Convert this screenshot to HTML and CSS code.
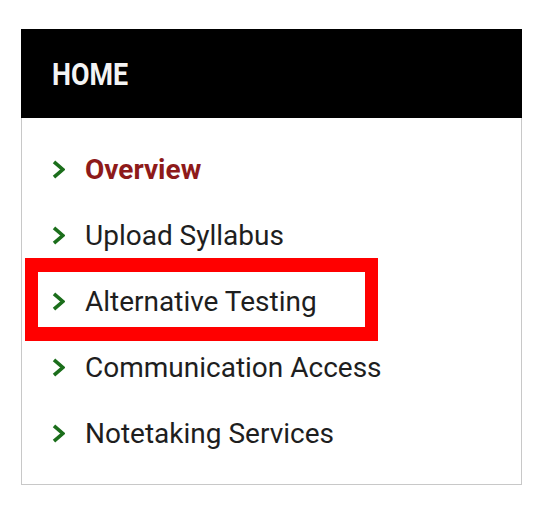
FILE: index.html
```html
<!DOCTYPE html>
<html>
<head>
<meta charset="utf-8">
<link rel="stylesheet" href="styles.css">
</head>
<body>
<nav class="menu">
  <div class="menu-head"><span class="menu-title">HOME</span></div>
  <ul class="menu-list">
    <li class="item active"><svg class="chev" viewBox="0 0 13 19"><path d="M2 1.8 L10.8 9.5 L2 17.2" /></svg><span>Overview</span></li>
    <li class="item"><svg class="chev" viewBox="0 0 13 19"><path d="M2 1.8 L10.8 9.5 L2 17.2" /></svg><span>Upload Syllabus</span></li>
    <li class="item highlighted"><svg class="chev" viewBox="0 0 13 19"><path d="M2 1.8 L10.8 9.5 L2 17.2" /></svg><span>Alternative Testing</span></li>
    <li class="item"><svg class="chev" viewBox="0 0 13 19"><path d="M2 1.8 L10.8 9.5 L2 17.2" /></svg><span>Communication Access</span></li>
    <li class="item"><svg class="chev" viewBox="0 0 13 19"><path d="M2 1.8 L10.8 9.5 L2 17.2" /></svg><span>Notetaking Services</span></li>
  </ul>
</nav>
</body>
</html>
```
FILE: styles.css
```css
html, body {
  margin: 0;
  padding: 0;
  background: #ffffff;
}
body {
  padding: 29px 0 0 21px;
  font-family: Roboto, "Liberation Sans", sans-serif;
}
.menu {
  width: 501px;
  border: 1px solid #c8c8c8;
  border-top: none;
  box-sizing: border-box;
  height: 456px;
}
.menu-head {
  background: #000;
  height: 89px;
  display: flex;
  align-items: center;
  padding-left: 31px;
  margin-left: -1px;
  margin-right: -1px;
}
.menu-title {
  display: inline-block;
  color: #f4f4f4;
  font-weight: 700;
  font-size: 32px;
  transform: scaleX(0.84);
  transform-origin: left center;
  line-height: 1;
}
.menu-list {
  list-style: none;
  margin: 0;
  padding: 18px 0 0 0;
}
.item {
  display: flex;
  align-items: center;
  height: 66px;
  padding-left: 30px;
  font-size: 28px;
  color: #1e1e1e;
}
.item span {
  margin-left: 20px;
}
.chev {
  flex-shrink: 0;
  width: 13px;
  height: 19px;
  fill: none;
  stroke: #1b6e1b;
  stroke-width: 3.6;
  stroke-linecap: butt;
  stroke-linejoin: miter;
}
.active span {
  color: #8e1a1a;
  font-weight: 700;
}
.highlighted {
  position: relative;
}
.highlighted::after {
  content: "";
  position: absolute;
  left: 3px;
  top: -10px;
  width: 353px;
  height: 83px;
  box-sizing: border-box;
  border: 13px solid #ff0000;
  border-top-width: 14px;
  border-bottom-width: 14px;
}
```
